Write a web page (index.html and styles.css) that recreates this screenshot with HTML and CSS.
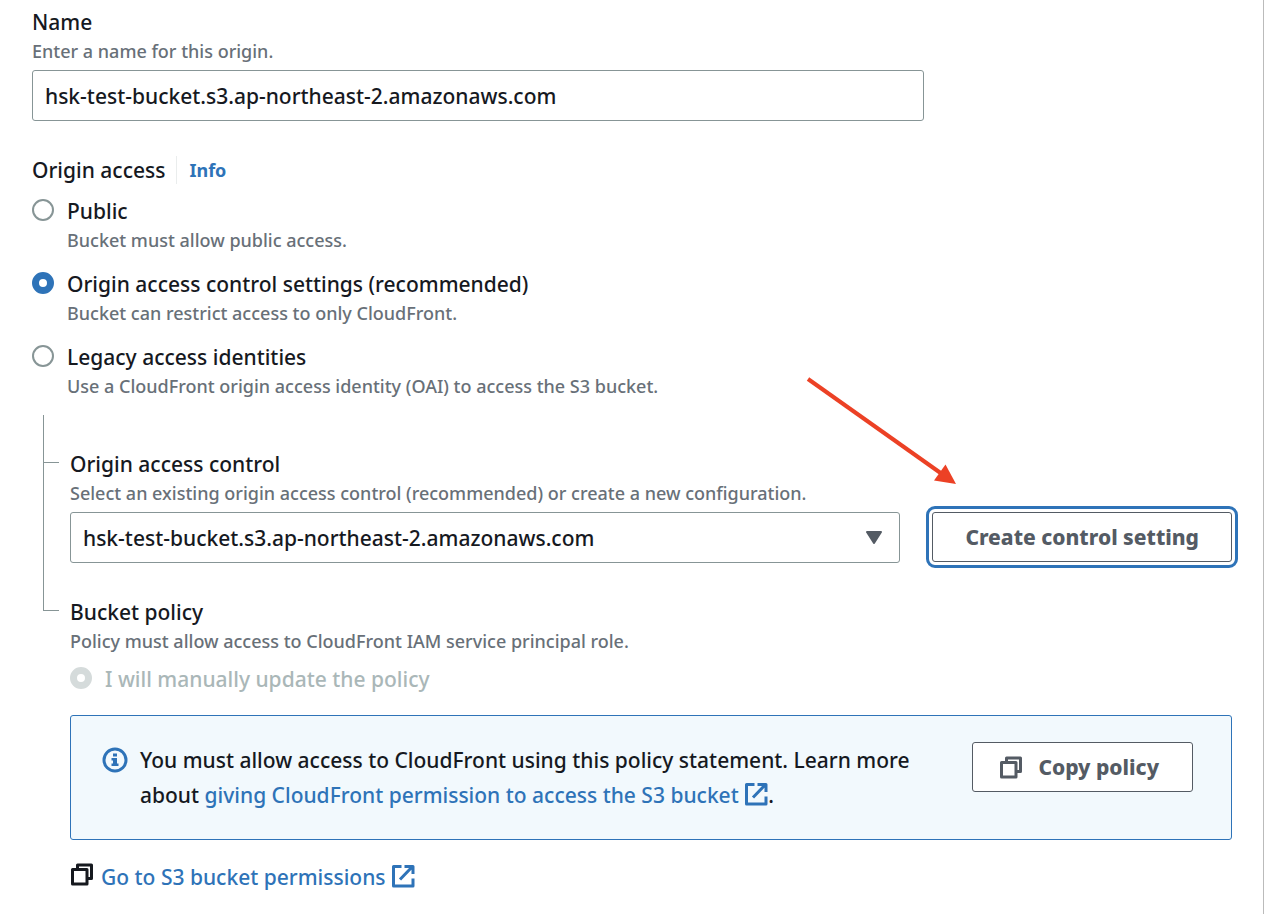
FILE: index.html
```
<!DOCTYPE html>
<html lang="en">
<head>
<meta charset="utf-8">
<title>Origin settings</title>
<link rel="stylesheet" href="styles.css">
</head>
<body>
<svg class="sprite" aria-hidden="true">
  <symbol id="copy" viewBox="0 0 24 24">
    <path d="M7.500 7V3h14v13.500H17M2.500 7.500h14.500v14.500h-14.500z" fill="none" stroke="currentColor" stroke-width="3" stroke-linejoin="round"/>
  </symbol>
  <symbol id="external" viewBox="0 0 24 24">
    <path d="M10.500 2.500H2.500v19.500h19.500V14.500M13.500 2.500h8.500V10M21 3L9 15.500" fill="none" stroke="currentColor" stroke-width="3" stroke-linejoin="round"/>
  </symbol>
</svg>
<form class="page">
  <div class="field">
    <label class="label" for="name">Name</label>
    <p class="hint">Enter a name for this origin.</p>
    <input class="control name-input" id="name" type="text" value="hsk-test-bucket.s3.ap-northeast-2.amazonaws.com">
  </div>

  <div class="field access" role="radiogroup" aria-labelledby="access-label">
    <div class="heading">
      <span class="label" id="access-label">Origin access</span>
      <a class="info" href="#">Info</a>
    </div>
    <div class="options">
      <div class="option">
        <input class="radio" type="radio" name="access" id="public">
        <div>
          <label class="label" for="public">Public</label>
          <p class="hint">Bucket must allow public access.</p>
        </div>
      </div>
      <div class="option">
        <input class="radio" type="radio" name="access" id="oac" checked>
        <div>
          <label class="label" for="oac">Origin access control settings (recommended)</label>
          <p class="hint">Bucket can restrict access to only CloudFront.</p>
        </div>
      </div>
      <div class="option">
        <input class="radio" type="radio" name="access" id="oai">
        <div>
          <label class="label" for="oai">Legacy access identities</label>
          <p class="hint">Use a CloudFront origin access identity (OAI) to access the S3 bucket.</p>
        </div>
      </div>
    </div>
  </div>

  <div class="tree">
    <div class="branch">
      <div class="rail"><div class="tick"></div><div class="stem"></div></div>
      <div class="leaf">
        <label class="label" for="control">Origin access control</label>
        <p class="hint">Select an existing origin access control (recommended) or create a new configuration.</p>
        <div class="row">
          <div class="select-wrap">
            <select class="control" id="control">
              <option>hsk-test-bucket.s3.ap-northeast-2.amazonaws.com</option>
            </select>
            <svg class="caret" viewBox="0 0 16 13" aria-hidden="true"><path d="M1 1h14L8 12z" fill="currentColor" stroke="currentColor" stroke-width="2" stroke-linejoin="round"/></svg>
          </div>
          <div class="action">
            <button class="button focused" type="button">Create control setting</button>
            <svg class="arrow" viewBox="0 0 160 120" aria-hidden="true"><path d="M8 9L142 104" stroke="currentColor" stroke-width="4"/><path d="M156 114L145.500 94.500L134 110.500z" fill="currentColor"/></svg>
          </div>
        </div>
      </div>
    </div>
    <div class="branch">
      <div class="rail"><div class="tick"></div></div>
      <div class="leaf">
        <span class="label">Bucket policy</span>
        <p class="hint">Policy must allow access to CloudFront IAM service principal role.</p>
        <div class="option manual">
          <input class="radio" type="radio" name="policy" id="manual" checked disabled>
          <label class="label" for="manual">I will manually update the policy</label>
        </div>
        <div class="alert">
          <svg class="info-icon" viewBox="0 0 26 26" aria-hidden="true"><circle cx="13" cy="13" r="11" fill="none" stroke="currentColor" stroke-width="3"/><path d="M11 6.500h4v3h-4zM9.500 11H15v5.500h1.500V19h-7v-2.500H11v-3H9.500z" fill="currentColor"/></svg>
          <p class="alert-text">You must allow access to CloudFront using this policy statement. Learn more about <a href="#">giving CloudFront permission to access the S3 bucket <svg class="icon"><use href="#external"/></svg></a>.</p>
          <button class="button copy" type="button"><svg class="icon"><use href="#copy"/></svg>Copy policy</button>
        </div>
        <div class="permissions">
          <svg class="icon"><use href="#copy"/></svg>
          <a href="#">Go to S3 bucket permissions <svg class="icon"><use href="#external"/></svg></a>
        </div>
      </div>
    </div>
  </div>
</form>
</body>
</html>
```
FILE: styles.css
```
* {
  box-sizing: border-box;
}

body {
  margin: 0;
  background: #fff;
  color: #16191f;
  font-family: "Noto Sans", "Open Sans", sans-serif;
  font-size: 21px;
  font-weight: 500;
}

p {
  margin: 0;
}

a {
  color: #2e73b8;
  text-decoration: none;
}

.sprite {
  display: none;
}

.page {
  min-height: 100vh;
  padding: 7px 31px 22px 32px;
  border-right: 1px solid #bbb;
}

.label {
  display: block;
  line-height: 30px;
}

.hint {
  color: #687078;
  font-size: 18px;
  line-height: 28px;
}

.control {
  display: block;
  width: 100%;
  height: 51px;
  margin: 0;
  padding: 0 12px;
  border: 1px solid #879596;
  border-radius: 3px;
  background: #fff;
  color: inherit;
  font: inherit;
  appearance: none;
}

.name-input {
  width: calc(75% - 8px);
  margin-top: 5px;
}

.access {
  margin-top: 34px;
}

.heading {
  display: flex;
  align-items: center;
  gap: 11px;
}

.info {
  padding-left: 12px;
  border-left: 1px solid #eaeded;
  font-size: 18px;
  font-weight: 700;
  line-height: 28px;
}

.options {
  display: grid;
  gap: 15px;
  margin-top: 11px;
}

.option {
  display: flex;
  gap: 13px;
}

.radio {
  flex: none;
  width: 22px;
  height: 22px;
  margin: 3px 0 0;
  border: 2px solid #879596;
  border-radius: 50%;
  background: #fff;
  appearance: none;
}

.radio:checked {
  border: 7px solid #2e73b8;
}

.radio:disabled {
  border-color: #d5dbdb;
}

.tree {
  margin: 15px 0 0 11px;
}

.branch {
  display: grid;
  grid-template-columns: 16px 1fr;
  gap: 11px;
}

.rail {
  display: flex;
  flex-direction: column;
}

.tick {
  height: 48px;
  border: solid #879596;
  border-width: 0 0 1px 1px;
}

.stem {
  flex: 1;
  border-left: 1px solid #879596;
}

.leaf {
  padding-top: 34px;
}

.row {
  display: flex;
  gap: 32px;
  margin-top: 5px;
}

.select-wrap {
  position: relative;
  flex: 1;
}

.caret {
  position: absolute;
  top: 19px;
  right: 18px;
  width: 16px;
  height: 13px;
  color: #545b64;
  pointer-events: none;
}

.action {
  position: relative;
}

.button {
  display: flex;
  align-items: center;
  justify-content: center;
  height: 50px;
  padding: 0 32px;
  border: 1px solid #545b64;
  border-radius: 3px;
  background: #fff;
  color: #545b64;
  font: inherit;
  font-weight: 800;
  white-space: nowrap;
}

.focused {
  outline: 3px solid #2e73b8;
  outline-offset: 3px;
}

.arrow {
  position: absolute;
  top: -142px;
  left: -132px;
  width: 160px;
  height: 120px;
  color: #ec4125;
}

.manual {
  margin-top: 9px;
  color: #aab7b8;
}

.alert {
  display: flex;
  align-items: flex-start;
  margin-top: 21px;
  padding: 26px 38px 26px 31px;
  border: 1px solid #2e73b8;
  border-radius: 3px;
  background: #f2f9fd;
}

.info-icon {
  flex: none;
  width: 26px;
  height: 26px;
  margin: 5px 12px 0 0;
  color: #2e73b8;
}

.alert-text {
  flex: 1;
  margin: 1px 32px 0 0;
  line-height: 35px;
}

.icon {
  width: 24px;
  height: 24px;
  vertical-align: -3px;
}

.copy {
  gap: 15px;
  padding: 0 33px 0 26px;
}

.permissions {
  display: flex;
  gap: 7px;
  margin-top: 22px;
  line-height: 30px;
}
```
